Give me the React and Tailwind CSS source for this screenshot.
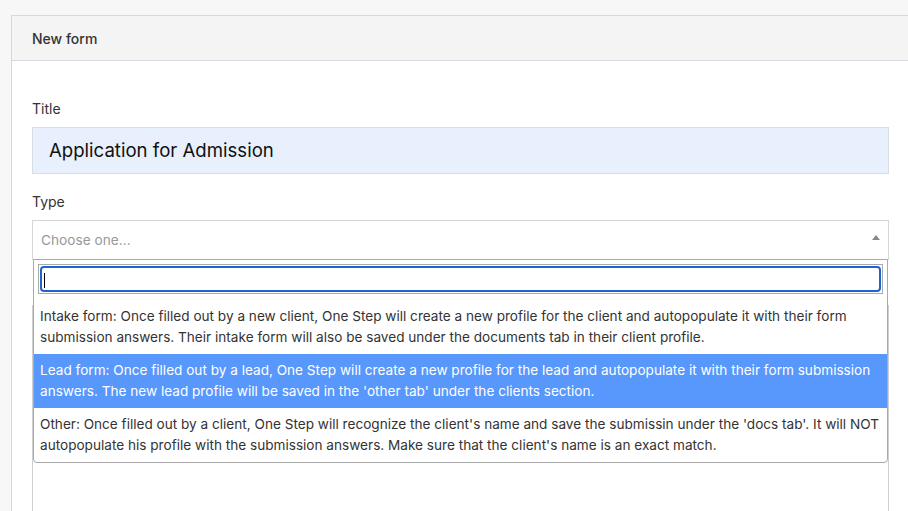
import React from "react";

export default function App() {
  const font = { fontFamily: "Inter, 'Noto Sans', sans-serif" };
  return (
    <div className="w-[908px] h-[511px] overflow-hidden bg-[#f7f7f7] pt-[15px] pl-[11px]" style={font}>
      <div className="w-[899px] h-[600px] border border-[#d3d9de] bg-white">
        <div className="h-[45px] bg-[#f4f4f4] border-b border-[#d3d9de] flex items-center pl-[20px] text-[14px] font-medium text-[#333]">
          New form
        </div>
        <div className="px-[20px] pt-[38px]">
          <div className="text-[14px] leading-[20px] text-[#333]">Title</div>
          <div className="mt-[8px] h-[47px] bg-[#e8f0fe] border border-[#d9dee4] flex items-center pl-[16px] text-[18.6px] text-[#111]">
            Application for Admission
          </div>
          <div className="mt-[18px] text-[14px] leading-[20px] text-[#333]">Type</div>
          <div className="relative mt-[8px]">
            <div className="h-[40px] border border-[#d6d6d6] flex items-center pl-[8px] text-[13.7px] text-[#999] relative">
              Choose one...
              <div className="absolute right-[8px] top-[14px] w-0 h-0 border-l-[4px] border-r-[4px] border-b-[5px] border-l-transparent border-r-transparent border-b-[#888]"></div>
            </div>
            <div className="mt-[45px] h-[300px] border border-[#cfcfcf]"></div>
            <div className="absolute left-[1px] right-[1px] top-[39px] bg-white border border-[#aaa] rounded-b-[4px] z-10">
              <div className="p-[4px]">
                <div className="h-[30px] border border-[#aaa] p-[1px]">
                  <div className="h-full border-2 border-[#1f63d3] rounded-[4px] relative">
                    <div className="absolute left-[2px] top-[5px] w-[1px] h-[15px] bg-black"></div>
                  </div>
                </div>
              </div>
              <div className="text-[13.6px] leading-[21px] text-[#333] pt-[2px]">
                <div className="pl-[6px] pr-[2px] py-[6px]">
                  Intake form: Once filled out by a new client, One Step will create a new profile for the client and autopopulate it with their form submission answers. Their intake form will also be saved under the documents tab in their client profile.
                </div>
                <div className="pl-[6px] pr-[2px] py-[6px] bg-[#5897fb] text-white">
                  Lead form: Once filled out by a lead, One Step will create a new profile for the lead and autopopulate it with their form submission answers. The new lead profile will be saved in the 'other tab' under the clients section.
                </div>
                <div className="pl-[6px] pr-[2px] py-[6px]">
                  Other: Once filled out by a client, One Step will recognize the client's name and save the submissin under the 'docs tab'. It will NOT autopopulate his profile with the submission answers. Make sure that the client's name is an exact match.
                </div>
              </div>
            </div>
          </div>
        </div>
      </div>
    </div>
  );
}
